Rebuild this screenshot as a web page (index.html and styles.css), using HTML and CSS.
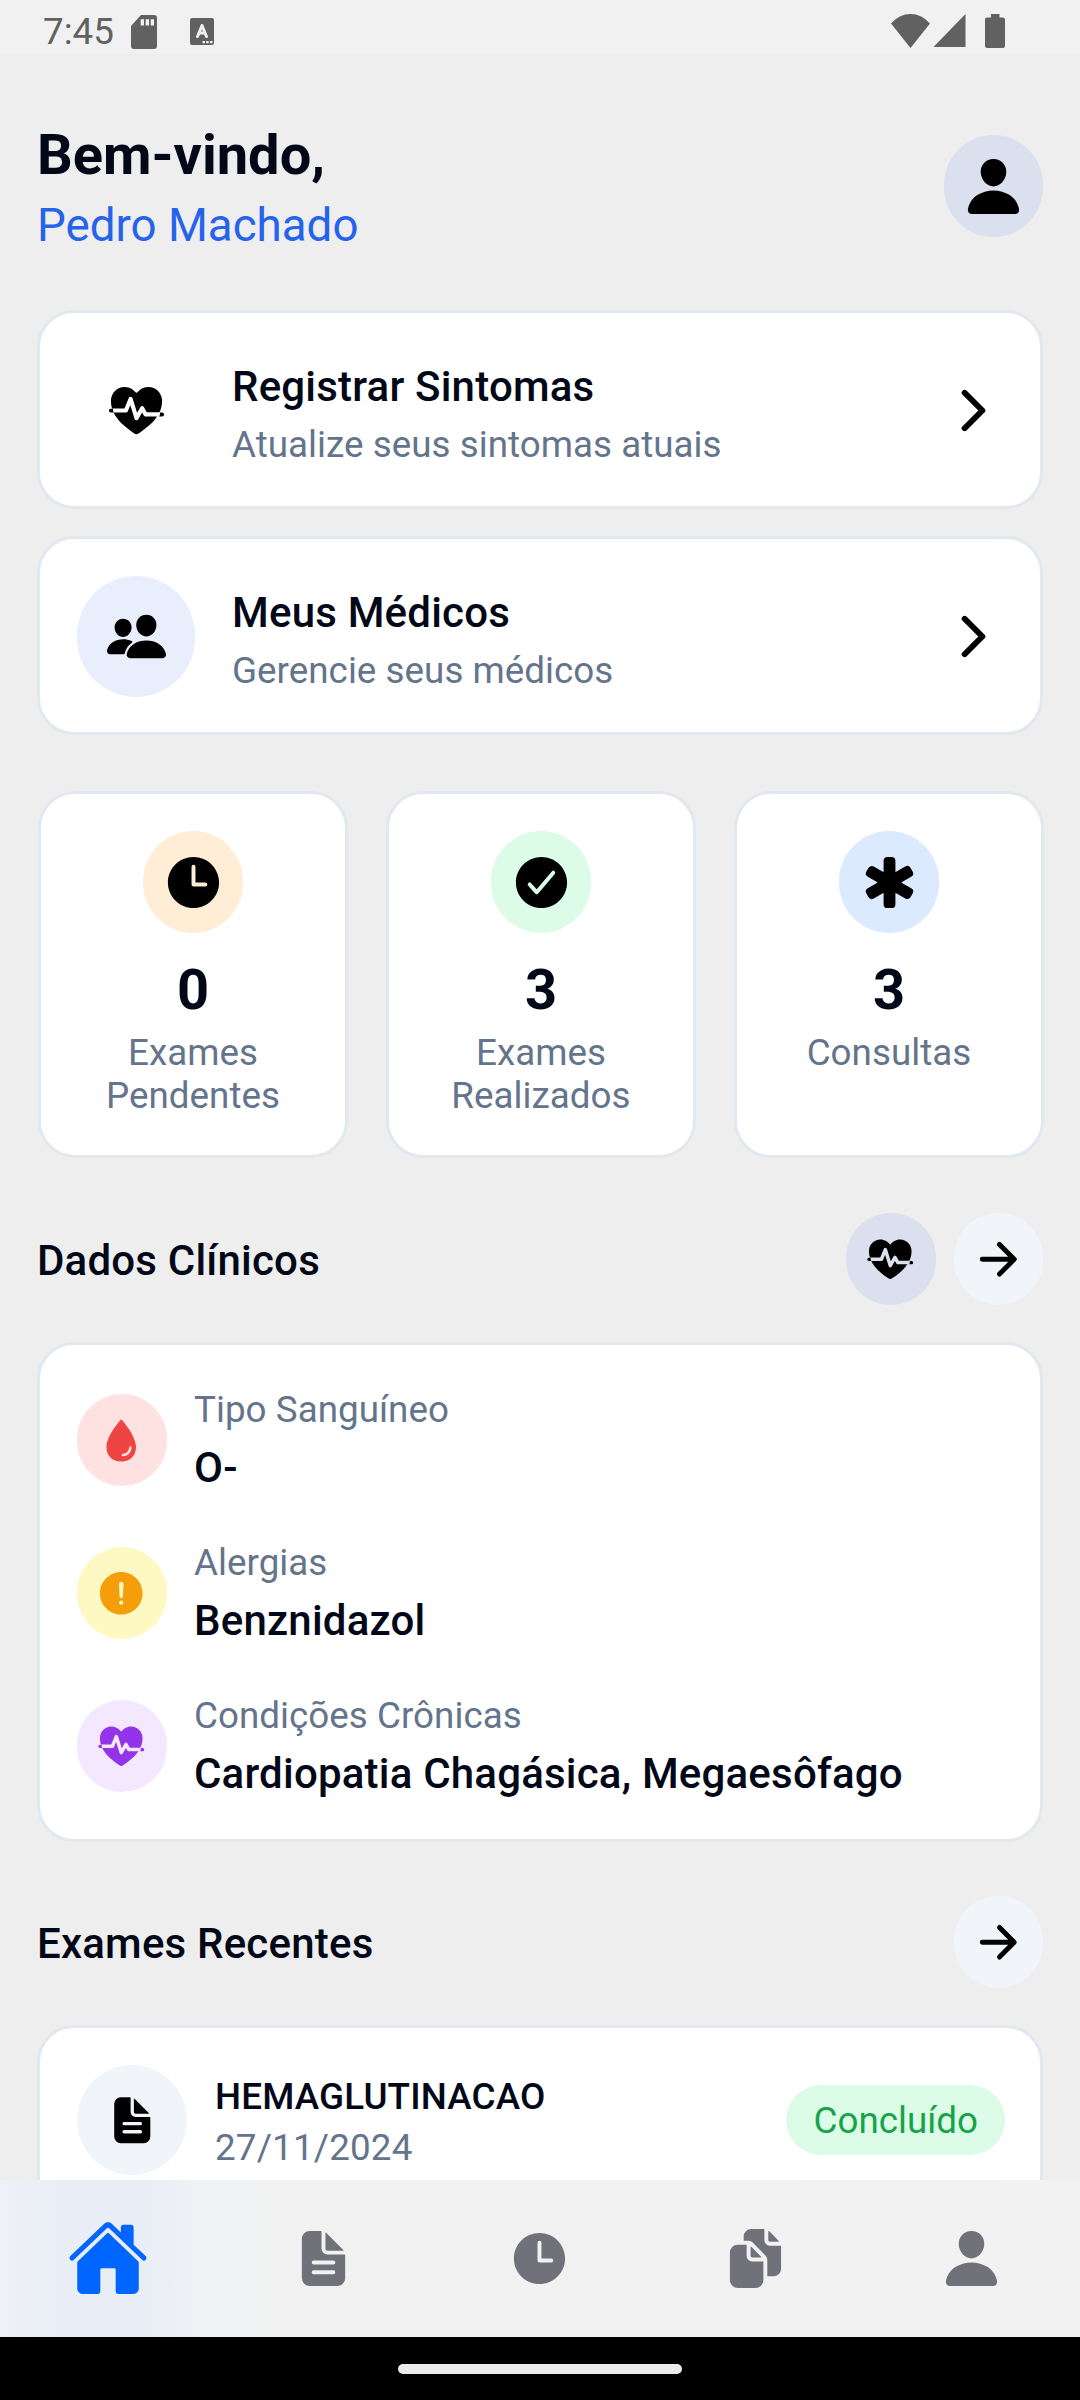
FILE: index.html
```html
<!DOCTYPE html>
<html lang="pt-BR">
<head>
<meta charset="utf-8">
<title>Início</title>
<link rel="stylesheet" href="styles.css">
</head>
<body>
<svg class="sprite" aria-hidden="true">
  <symbol id="person" viewBox="0 0 512 512"><path d="M332.64 64.58C313.18 43.57 286 32 256 32c-30.16 0-57.43 11.5-76.8 32.38-19.58 21.11-29.12 49.8-26.88 80.78C156.76 206.28 203.27 256 256 256s99.16-49.71 103.67-110.82c2.27-30.7-7.33-59.33-27.03-80.6zM432 480H80a31 31 0 01-24.2-11.13c-6.5-7.77-9.12-18.38-7.18-29.11C57.06 392.94 83.4 353.61 124.8 326c36.78-24.51 83.37-38 131.2-38s94.42 13.5 131.2 38c41.4 27.6 67.74 66.93 76.18 113.75 1.94 10.73-.68 21.34-7.18 29.11A31 31 0 01432 480z"/></symbol>
  <symbol id="heart" viewBox="0 0 512 512"><path d="M256 448a32 32 0 01-18-5.57c-78.59-53.35-112.62-89.93-131.39-112.8-40-48.75-59.15-98.8-58.61-153C48.63 114.52 98.46 64 159.08 64c44.08 0 74.61 24.83 92.39 45.51a6 6 0 009.06 0C278.31 88.81 308.84 64 352.92 64c60.62 0 110.45 50.52 111.08 112.64.54 54.21-18.63 104.26-58.61 153-18.77 22.87-52.8 59.45-131.39 112.8A32 32 0 01256 448z"/><path class="pulse" d="M58 256H170L208 162L256 318L302 238L330 288H454"/><path d="M48 241H66Q60 256 72 273H48A16 16 0 0148 241zM464 273H446Q452 288 440 305H464A16 16 0 00464 273z"/></symbol>
  <symbol id="people" viewBox="0 0 512 512"><path d="M336 256c-20.56 0-40.44-9.18-56-25.84-15.13-16.25-24.37-37.92-26-61-1.74-24.62 5.77-47.26 21.14-63.76S312 80 336 80c23.83 0 45.38 9.06 60.7 25.52 15.47 16.62 23 39.22 21.26 63.63-1.67 23.11-10.9 44.77-26 61C376.44 246.82 356.57 256 336 256zM467.83 432H204.18a27.71 27.71 0 01-22-10.67 30.22 30.22 0 01-5.26-25.79c8.42-33.81 29.28-61.85 60.32-81.08C264.79 297.4 299.86 288 336 288c36.85 0 71 9 98.71 26.05 31.11 19.13 52 47.33 60.38 81.55a30.27 30.27 0 01-5.32 25.78A27.68 27.68 0 01467.83 432zM147 260c-35.19 0-66.13-32.72-69-72.93-1.42-20.6 5-39.65 18-53.62 12.86-13.83 31-21.45 51-21.45s38 7.66 50.93 21.57c13.1 14.08 19.5 33.09 18 53.52-2.87 40.2-33.8 72.91-68.93 72.91zM212.66 291.45c-17.59-8.6-40.42-12.9-65.65-12.9-29.46 0-58.07 7.68-80.57 21.62-25.51 15.83-42.67 38.88-49.6 66.71a27.39 27.39 0 004.79 23.36A25.32 25.32 0 0041.72 400h111a8 8 0 007.87-6.57c.11-.63.25-1.26.41-1.88 8.48-34.06 28.35-62.84 57.71-83.82a8 8 0 00-.63-13.39c-1.57-.92-3.37-1.89-5.42-2.89z"/></symbol>
  <symbol id="chevron" viewBox="0 0 512 512"><path fill="none" stroke="currentColor" stroke-width="48" stroke-linecap="round" stroke-linejoin="round" d="M184 112l144 144-144 144"/></symbol>
  <symbol id="arrow" viewBox="0 0 512 512"><path fill="none" stroke="currentColor" stroke-width="48" stroke-linecap="round" stroke-linejoin="round" d="M268 112l144 144-144 144M392 256H100"/></symbol>
  <symbol id="time" viewBox="0 0 512 512"><path d="M256 48C141.13 48 48 141.13 48 256s93.13 208 208 208 208-93.13 208-208S370.87 48 256 48zm96 240h-96a16 16 0 01-16-16V128a16 16 0 0132 0v128h80a16 16 0 010 32z"/></symbol>
  <symbol id="check" viewBox="0 0 512 512"><path d="M256 48C141.31 48 48 141.31 48 256s93.31 208 208 208 208-93.31 208-208S370.69 48 256 48zm108.25 138.29l-134.4 160a16 16 0 01-12 5.71h-.27a16 16 0 01-11.89-5.3l-57.6-64a16 16 0 1123.78-21.4l45.29 50.32 122.59-145.91a16 16 0 0124.5 20.58z"/></symbol>
  <symbol id="medical" viewBox="0 0 512 512"><path d="M272 464h-32a32 32 0 01-32-32l.05-85.82a4 4 0 00-6-3.47l-74.34 43.06a31.48 31.48 0 01-43-11.52l-16.5-28.64-.06-.1a31.65 31.65 0 0111.56-42.8l74.61-43.25a4 4 0 000-6.92l-74.54-43.21a31.41 31.41 0 01-11.55-43l16.44-28.55a31.48 31.48 0 0119.27-14.74 31.14 31.14 0 0123.8 3.2l74.31 43a4 4 0 006-3.47L208 80a32 32 0 0132-32h32a32 32 0 0132 32v85.72a4 4 0 006 3.47l74.34-43.06a31.51 31.51 0 0143 11.52l16.49 28.64.06.09a31.52 31.52 0 01-11.64 42.86l-74.53 43.2a4 4 0 000 6.92l74.53 43.2a31.42 31.42 0 0111.56 43l-16.44 28.55a31.48 31.48 0 01-19.27 14.74 31.14 31.14 0 01-23.8-3.2l-74.31-43a4 4 0 00-6 3.46L304 432a32 32 0 01-32 32z"/></symbol>
  <symbol id="water" viewBox="0 0 512 512"><path d="M265.12 60.12a12 12 0 00-18.23 0C215.23 97.15 112 225.17 112 320c0 88.37 55.64 144 144 144s144-55.63 144-144c0-94.83-103.23-222.85-134.88-259.88zM272 412a12 12 0 01-11.34-16 11.89 11.89 0 0111.41-8A60.06 60.06 0 00332 328.07a11.89 11.89 0 018-11.41A12 12 0 01356 328a84.09 84.09 0 01-84 84z"/></symbol>
  <symbol id="alert" viewBox="0 0 512 512"><path d="M256 48C141.31 48 48 141.31 48 256s93.31 208 208 208 208-93.31 208-208S370.69 48 256 48zm0 319.91a20 20 0 1120-20 20 20 0 01-20 20zm21.72-201.15l-5.74 122a16 16 0 01-32 0l-5.74-121.94v-.05a21.74 21.74 0 1143.44 0z"/></symbol>
  <symbol id="document" viewBox="0 0 512 512"><path d="M428 224H288a48 48 0 01-48-48V36a4 4 0 00-4-4h-92a64 64 0 00-64 64v320a64 64 0 0064 64h224a64 64 0 0064-64V228a4 4 0 00-4-4zm-92 160H176a16 16 0 010-32h160a16 16 0 010 32zm0-80H176a16 16 0 010-32h160a16 16 0 010 32z"/><path d="M419.22 188.59L275.41 44.78a2 2 0 00-3.41 1.41V176a16 16 0 0016 16h129.81a2 2 0 001.41-3.41z"/></symbol>
  <symbol id="documents" viewBox="0 0 512 512"><path d="M298.39 248a4 4 0 002.86-6.8l-78.4-79.72a4 4 0 00-6.85 2.81V236a12 12 0 0012 12z"/><path d="M197 267a43.67 43.67 0 01-13-31v-92h-72a64.19 64.19 0 00-64 64v224a64 64 0 0064 64h144a64 64 0 0064-64V280h-92a43.61 43.61 0 01-31-13zM372 120h70.39a4 4 0 002.86-6.8l-78.4-79.72a4 4 0 00-6.85 2.81V108a12 12 0 0012 12z"/><path d="M372 152a44.34 44.34 0 01-44-44V16H220a60.07 60.07 0 00-60 60v36h42.12A40.81 40.81 0 01231 124.14l109.16 111a41.11 41.11 0 0111.83 29V400h53.05c32.51 0 58.95-26.92 58.95-60V152z"/></symbol>
  <symbol id="home" viewBox="0 0 512 512"><path d="M261.56 101.69a8 8 0 00-11.06 0L66.4 277.15a8 8 0 00-2.47 5.79L63.9 448a32 32 0 0032 32H192a16 16 0 0016-16V328a8 8 0 018-8h80a8 8 0 018 8v136a16 16 0 0016 16h96.06a32 32 0 0032-32V282.94a8 8 0 00-2.47-5.79z"/><path d="M490.91 244.15l-74.8-71.56V64a16 16 0 00-16-16h-48a16 16 0 00-16 16v32l-57.92-55.38C272.77 35.14 264.71 32 256 32c-8.68 0-16.72 3.14-22.14 8.63l-212.7 203.5c-6.22 6-7 15.87-1.34 22.37A16 16 0 0043 267.56L250.5 69.28a8 8 0 0111.06 0l207.52 198.28a16 16 0 0022.59-.44c6.14-6.36 5.63-16.86-.76-22.97z"/></symbol>
</svg>

<header class="status">
  <span class="clock">7:45</span>
  <svg class="sd" viewBox="0 0 26 34"><path fill-rule="evenodd" d="M10 0H23Q26 0 26 3V31Q26 34 23 34H3Q0 34 0 31V11ZM9.700 4.300V10.400H13V4.300ZM14.700 4.300V10.400H18V4.300ZM19.700 4.300V10.400H23V4.300Z"/></svg>
  <svg class="keyboard" viewBox="0 0 24 27"><rect width="24" height="27" rx="2"/><path fill="none" stroke="#f1f1f1" stroke-width="3" stroke-linecap="round" stroke-linejoin="round" d="M7.500 18.500L12 7.500L16.500 18.500M9 15H15"/><path fill="#f1f1f1" d="M12.500 23H15V25.300H12.500ZM16.200 23H18.700V25.300H16.200ZM20 23H22.500V25.300H20Z"/></svg>
  <svg class="wifi" viewBox="0 0 39 34"><path d="M19.500 34L0 9.500Q8 0 19.500 0T39 9.500Z"/></svg>
  <svg class="signal" viewBox="0 0 33 34"><path d="M33 0V34H0Z"/></svg>
  <svg class="battery" viewBox="0 0 20 34"><path d="M6 0H14.500V3.500H18Q20 3.500 20 5.500V32Q20 34 18 34H2Q0 34 0 32V5.500Q0 3.500 2 3.500H6Z"/></svg>
</header>

<main class="content">
  <section class="welcome">
    <div class="greeting">
      <h1>Bem-vindo,</h1>
      <p class="username">Pedro Machado</p>
    </div>
    <div class="bubble avatar"><svg class="icon"><use href="#person"/></svg></div>
  </section>

  <section class="actions">
    <article class="card action">
      <div class="bubble action-icon plain"><svg class="icon"><use href="#heart"/></svg></div>
      <div class="action-text"><h2>Registrar Sintomas</h2><p>Atualize seus sintomas atuais</p></div>
      <svg class="icon chevron"><use href="#chevron"/></svg>
    </article>
    <article class="card action">
      <div class="bubble action-icon indigo"><svg class="icon"><use href="#people"/></svg></div>
      <div class="action-text"><h2>Meus Médicos</h2><p>Gerencie seus médicos</p></div>
      <svg class="icon chevron"><use href="#chevron"/></svg>
    </article>
  </section>

  <section class="stats">
    <article class="card stat"><div class="bubble stat-icon orange"><svg class="icon"><use href="#time"/></svg></div><strong>0</strong><p>Exames Pendentes</p></article>
    <article class="card stat"><div class="bubble stat-icon green"><svg class="icon"><use href="#check"/></svg></div><strong>3</strong><p>Exames Realizados</p></article>
    <article class="card stat"><div class="bubble stat-icon blue"><svg class="icon"><use href="#medical"/></svg></div><strong>3</strong><p>Consultas</p></article>
  </section>

  <section>
    <div class="section-head">
      <h2>Dados Clínicos</h2>
      <div class="bubble small lavender"><svg class="icon sm"><use href="#heart"/></svg></div>
      <div class="bubble small slate"><svg class="icon sm"><use href="#arrow"/></svg></div>
    </div>
    <div class="card clinical">
      <div class="row"><div class="bubble small red"><svg class="icon sm"><use href="#water"/></svg></div><div class="row-text"><p>Tipo Sanguíneo</p><h3>O-</h3></div></div>
      <div class="row"><div class="bubble small yellow"><svg class="icon sm"><use href="#alert"/></svg></div><div class="row-text"><p>Alergias</p><h3>Benznidazol</h3></div></div>
      <div class="row"><div class="bubble small purple"><svg class="icon sm"><use href="#heart"/></svg></div><div class="row-text"><p>Condições Crônicas</p><h3>Cardiopatia Chagásica, Megaesôfago</h3></div></div>
    </div>
  </section>

  <section class="recent">
    <div class="section-head">
      <h2>Exames Recentes</h2>
      <div class="bubble small slate"><svg class="icon sm"><use href="#arrow"/></svg></div>
    </div>
    <div class="card exam">
      <div class="bubble exam-icon slate"><svg class="icon sm"><use href="#document"/></svg></div>
      <div class="exam-text"><h4>HEMAGLUTINACAO</h4><p>27/11/2024</p></div>
      <span class="badge">Concluído</span>
    </div>
  </section>
</main>

<nav class="tabs">
  <a class="tab active"><svg class="icon lg"><use href="#home"/></svg></a>
  <a class="tab"><svg class="icon"><use href="#document"/></svg></a>
  <a class="tab"><svg class="icon"><use href="#time"/></svg></a>
  <a class="tab"><svg class="icon"><use href="#documents"/></svg></a>
  <a class="tab"><svg class="icon"><use href="#person"/></svg></a>
</nav>
<footer class="gesture"><span class="handle"></span></footer>
</body>
</html>
```
FILE: styles.css
```css
* { box-sizing: border-box; margin: 0; padding: 0; }

body {
  width: 1080px;
  height: 2400px;
  display: flex;
  flex-direction: column;
  overflow: hidden;
  background: #eeeeee;
  color: #020817;
  font-family: Roboto, sans-serif;
  font-size: 36.75px;
  line-height: 43px;
}

p { color: #64748b; letter-spacing: 0.04px; }
h2, h3 { font-size: 42px; line-height: 49px; font-weight: 500; letter-spacing: 0.2px; }
svg { display: block; flex: none; fill: currentColor; }
.sprite { display: none; }

.icon { width: 63px; height: 63px; color: inherit; }
.icon.sm { width: 52.5px; height: 52.5px; }
.icon.lg { width: 82px; height: 82px; }
.icon.chevron { color: #000; }
.pulse {
  fill: none;
  stroke: var(--bg);
  stroke-width: 34px;
  stroke-linejoin: round;
}

/* status bar */
.status {
  height: 53px;
  flex: none;
  display: flex;
  align-items: flex-start;
  padding: 14px 75px 0 43px;
  background: #f1f1f1;
  color: #616161;
}
.clock { width: 88px; line-height: 36px; font-size: 36.75px; }
.sd { width: 26px; height: 34px; margin-top: 1px; }
.keyboard { width: 24px; height: 27px; margin: 4px 0 0 33px; }
.wifi { width: 39px; height: 34px; margin-left: auto; }
.signal { width: 33px; height: 33px; margin-left: 3px; }
.battery { width: 20px; height: 34px; margin-left: 19px; }

.content {
  flex: 1;
  min-height: 0;
  overflow: hidden;
  display: flex;
  flex-direction: column;
  gap: 55px;
  padding: 68px 37px 0;
}
.content > * { flex: none; }

.bubble {
  flex: none;
  display: flex;
  align-items: center;
  justify-content: center;
  border-radius: 60px;
  background: var(--bg);
  color: #000;
}
.avatar { width: 99px; height: 102px; --bg: #dbe0ee; }
.small { width: 90px; height: 92px; }
.plain { --bg: #fff; }
.indigo { --bg: #e9eefd; }
.orange { --bg: #ffedd5; }
.green { --bg: #dcfce7; }
.blue { --bg: #dbeafe; }
.lavender { --bg: #dbdfee; }
.slate { --bg: #f1f5f9; }
.red { --bg: #fee2e2; color: #ef4444; }
.yellow { --bg: #fef9c3; color: #f59e0b; }
.purple { --bg: #f3e8ff; color: #9333ea; }

.card {
  background: #fff;
  border: 3px solid #e2e8f0;
  border-radius: 37px;
}

.welcome {
  display: flex;
  align-items: center;
  justify-content: space-between;
  height: 130px;
  margin-bottom: 4px;
}
.greeting { padding-top: 3px; }
h1 { font-size: 56px; line-height: 66px; font-weight: 700; }
.username { margin-top: 11px; font-size: 45.7px; line-height: 54px; letter-spacing: 0; color: #2563eb; }

.actions { display: flex; flex-direction: column; gap: 27px; }
.action {
  height: 199px;
  display: flex;
  align-items: center;
  gap: 37px;
  padding: 1px 35px 0 37px;
}
.action-icon { width: 118px; height: 121px; }
.action-text {
  flex: 1;
  display: flex;
  flex-direction: column;
  gap: 12px;
  padding-top: 8px;
}

.stats {
  display: grid;
  grid-template-columns: repeat(3, 1fr);
  gap: 38px;
  margin: 1px -1px 0 0;
  padding-left: 1px;
}
.stat {
  height: 367px;
  display: flex;
  flex-direction: column;
  align-items: center;
  padding: 37px;
  text-align: center;
}
.stat-icon { width: 100px; height: 102px; }
.stat strong { margin: 24px 0 8px; font-size: 56px; line-height: 66px; font-weight: 700; }

.section-head { display: flex; align-items: center; gap: 18px; margin-bottom: 37px; }
.section-head h2 { flex: 1; padding-top: 2px; }
.section-head .small { width: 89px; }
.section-head .lavender { width: 90px; padding-right: 1px; }

.clinical {
  height: 500px;
  display: flex;
  flex-direction: column;
  gap: 39px;
  padding: 37px;
}
.row { height: 114px; display: flex; align-items: center; gap: 27px; padding-top: 2px; }
.row .small { padding-right: 1px; }
.row-text { display: flex; flex-direction: column; gap: 12px; }

.recent { margin-top: -1px; }
.exam {
  height: 196px;
  display: flex;
  align-items: flex-start;
  gap: 28px;
  padding: 37px 35px 37px 37px;
}
.exam-icon { width: 110px; height: 110px; }
.exam-text { flex: 1; display: flex; flex-direction: column; gap: 8px; padding-top: 10px; }
.exam-text p { letter-spacing: 0.2px; }
h4 { font-size: 36.75px; font-weight: 500; letter-spacing: 0.15px; }
.badge {
  height: 70px;
  margin-top: 20px;
  padding: 0 27px 0 28px;
  border-radius: 35px;
  background: #dcfce7;
  color: #16a34a;
  line-height: 71px;
}

.tabs {
  flex: none;
  height: 157px;
  display: grid;
  grid-template-columns: repeat(5, 1fr);
  background: linear-gradient(90deg, #eef1f6 0, #e8edf6 75px, #e8edf6 130px, #eff1f4 200px, #f1f1f1 290px, #f2f2f2 100%);
  color: #71717a;
}
.tab { display: flex; align-items: center; justify-content: center; padding-right: 2px; }
.active { padding: 0 1px 2px 0; color: #0066ff; }

.gesture {
  flex: none;
  height: 63px;
  display: flex;
  align-items: center;
  justify-content: center;
  background: #000;
}
.handle { width: 284px; height: 10px; border-radius: 5px; background: #ececec; }
```
